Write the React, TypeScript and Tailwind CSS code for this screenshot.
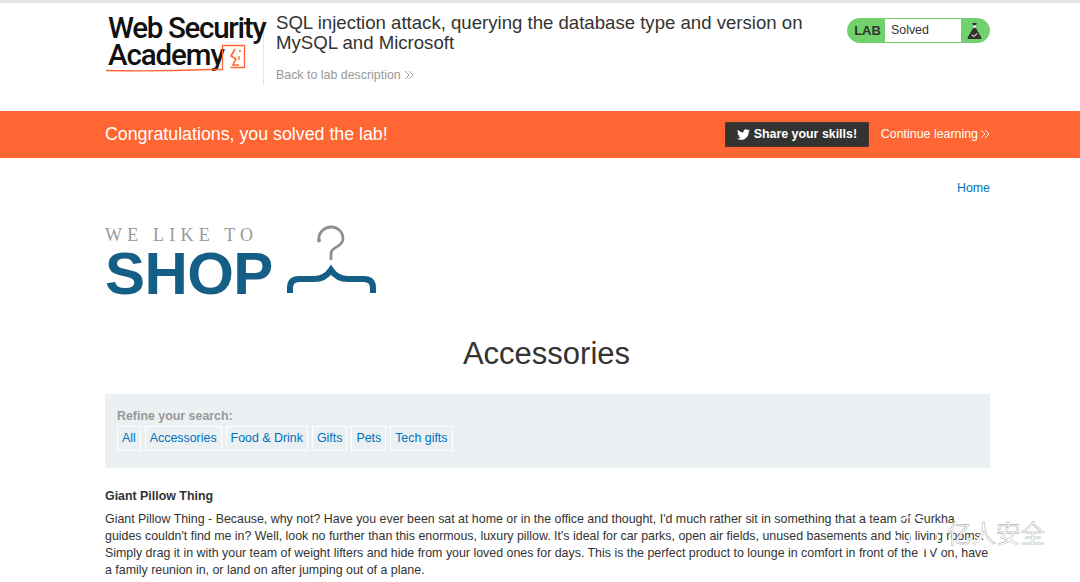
import { FaTwitter } from 'react-icons/fa'

const categories = ['All', 'Accessories', 'Food & Drink', 'Gifts', 'Pets', 'Tech gifts']

function Chevrons({ className }: { className?: string }) {
  return (
    <svg viewBox="0 0 10 10" className={className} fill="none" stroke="currentColor" strokeWidth="0.9">
      <path d="M1 1l4 4-4 4M5 1l4 4-4 4" />
    </svg>
  )
}

function AcademyLogo() {
  return (
    <div className="relative h-[58px] w-[156px] font-['Roboto',sans-serif] font-medium text-[#111] select-none">
      <div className="ml-[3px] text-[29.5px] leading-[27px] tracking-[-1.3px] whitespace-nowrap">Web Security</div>
      <div className="ml-[3px] text-[29.5px] leading-[26px] tracking-[-1.1px] whitespace-nowrap">Academy</div>
      <svg viewBox="0 0 156 58" className="absolute top-0 left-0 h-[58px] w-[156px]" fill="none" stroke="#ff6633">
        <path d="M1 55.500c40 1 78 0 103-1h13.500V30.500h22v22h-14" strokeWidth="1.300" />
        <path d="M130 34l-4 7 5 3-3 6h6" strokeWidth="1.600" />
        <path d="M134 36h2M134 41v4" strokeWidth="1.300" />
      </svg>
    </div>
  )
}

function Hanger() {
  return (
    <svg viewBox="0 0 92 70" className="h-[70px] w-[92px]" fill="none">
      <path d="M33 15c-1-8 6-13 12-13 7 0 12 5 12 12 0 8-12 8-12 14v7" stroke="#8f8f8f" strokeWidth="2.800" />
      <circle cx="33" cy="15.500" r="2" fill="#8f8f8f" />
      <path d="M4 68v-5c0-6 3-9 9-9h15c7 0 13-3 17-9 4 6 10 9 17 9h16c6 0 9 3 9 9v5" stroke="#155e85" strokeWidth="6" />
    </svg>
  )
}

function Flask() {
  return (
    <svg viewBox="0 0 14 16" className="h-[17px] w-[15px]">
      <path d="M5 1h4v1H8.500v4l5 8.500c.3.800-.2 1.500-1 1.500h-11c-.8 0-1.300-.7-1-1.500l5-8.500V2H5z" fill="#333332" />
      <path d="M4.500 12l2 1.700 3-3" fill="none" stroke="#d9d9d9" strokeWidth="1" />
      <rect x="5.500" y="3" width="3" height="2.500" fill="#e8e8e8" />
    </svg>
  )
}

export default function App() {
  return (
    <div className="relative h-[582px] w-[1080px] overflow-hidden bg-white font-['Liberation_Sans',Arial,sans-serif] text-[#333332]">
      <div className="h-[3px] bg-[#e6e6ea]" />

      <header className="flex h-[108px] pt-[10px] pr-[90px] pl-[105px]">
        <div className="mt-[2px] w-[158px] shrink-0">
          <AcademyLogo />
        </div>
        <div className="mt-[5px] h-[67px] w-[1px] bg-[#e6e6e6]" />
        <div className="ml-[12px] w-[545px] shrink-0">
          <h2 className="text-[18.6px] leading-[20px] text-[#333332]">
            SQL injection attack, querying the database type and version on MySQL and Microsoft
          </h2>
          <a className="mt-[15px] flex items-center gap-[3px] text-[12.4px] leading-[14px] text-[#999]">
            Back to lab description
            <Chevrons className="h-[10px] w-[10px]" />
          </a>
        </div>
        <div className="mt-[5px] ml-auto flex h-[25px] w-[143px] overflow-hidden rounded-full border border-[#70d16d] bg-[#70d16d] text-[12.4px]">
          <span className="flex w-[37px] items-center justify-center pl-[2px] text-[13px] font-bold">LAB</span>
          <span className="flex flex-1 items-center bg-white pl-[6px]">Solved</span>
          <span className="flex w-[28px] items-center justify-center pr-[2px]">
            <Flask />
          </span>
        </div>
      </header>

      <section className="flex h-[47px] items-center bg-[#ff6633] pr-[90px] pl-[105px] text-white">
        <h4 className="text-[17.8px]">Congratulations, you solved the lab!</h4>
        <a className="ml-auto flex h-[25px] w-[144px] items-center justify-center gap-[4px] border border-[#4a3a33] bg-[#333332] text-[12.4px] font-bold">
          <FaTwitter className="h-[13px] w-[13px]" />
          Share your skills!
        </a>
        <a className="ml-[12px] flex items-center gap-[2px] text-[12.4px]">
          Continue learning
          <Chevrons className="h-[10px] w-[10px]" />
        </a>
      </section>

      <main className="pr-[90px] pl-[105px]">
        <nav className="pt-[23px] text-right text-[12.4px] leading-[14px] text-[#0071bc]">Home</nav>

        <div className="mt-[31px] flex items-start">
          <div className="w-[181px]">
            <div className="font-['Liberation_Serif',serif] text-[18px] leading-[18px] tracking-[5.200px] whitespace-nowrap text-[#999]">
              WE LIKE TO
            </div>
            <div className="mt-[1px] text-[60px] leading-[58px] font-bold tracking-[-0.6px] text-[#155e85]">SHOP</div>
          </div>
          <div className="mt-[-1px]">
            <Hanger />
          </div>
        </div>

        <h1 className="mt-[33px] pr-[2px] text-center text-[31px] leading-[36px] text-[#333332]">Accessories</h1>

        <section className="mt-[22px] h-[74px] bg-[#ebf0f2] px-[12px] pt-[15px]">
          <div className="text-[12.4px] leading-[14px] font-bold text-[#999]">Refine your search:</div>
          <div className="mt-[3px] flex gap-[4px]">
            {categories.map((c) => (
              <a key={c} className="flex h-[25px] items-center border border-white px-[4px] text-[12.4px] text-[#0071bc]">
                {c}
              </a>
            ))}
          </div>
        </section>

        <h3 className="mt-[21px] text-[12.4px] leading-[14px] font-bold">Giant Pillow Thing</h3>
        <p className="mt-[8px] text-[12.4px] leading-[17px]">
          Giant Pillow Thing - Because, why not? Have you ever been sat at home or in the office and thought, I'd much
          rather sit in something that a team of Gurkha guides couldn't find me in? Well, look no further than this
          enormous, luxury pillow. It's ideal for car parks, open air fields, unused basements and big living rooms.
          Simply drag it in with your team of weight lifters and hide from your loved ones for days. This is the perfect
          product to lounge in comfort in front of the TV on, have a family reunion in, or land on after jumping out of a
          plane.
        </p>
      </main>

      {/* watermark over the text */}
      <div className="absolute top-[514px] left-[893px] flex h-[38px] items-center">
        <svg viewBox="0 0 50 36" className="h-[36px] w-[50px]" fill="none" stroke="#fff" strokeWidth="1.600">
          <path d="M18 2C9 2 1 8 1 15c0 4 2 7 5 9l-1 4 5-2c2 .6 3 .8 5 .8" />
          <path d="M18 2c7 0 14 4 16 10" />
          <path d="M31 12c-8 0-15 5-15 11s7 11 15 11c2 0 3-.2 5-.8l4 2-1-4c4-2 6-5 6-8.200 0-6-6-11-14-11z" />
        </svg>
        <span
          className="ml-[4px] font-['Noto_Sans_CJK_SC',sans-serif] text-[24.5px] leading-[30px] text-white"
          style={{ WebkitTextStroke: '0.4px #999' }}
        >
          亿人安全
        </span>
      </div>
    </div>
  )
}
